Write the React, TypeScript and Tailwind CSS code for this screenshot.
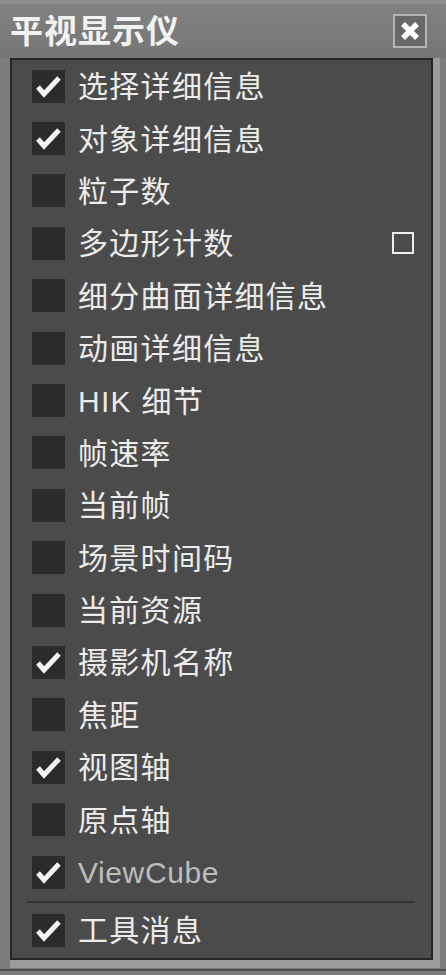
const items = [
  { label: "选择详细信息", checked: true },
  { label: "对象详细信息", checked: true },
  { label: "粒子数", checked: false },
  { label: "多边形计数", checked: false, extra: true },
  { label: "细分曲面详细信息", checked: false },
  { label: "动画详细信息", checked: false },
  { label: "HIK 细节", checked: false },
  { label: "帧速率", checked: false },
  { label: "当前帧", checked: false },
  { label: "场景时间码", checked: false },
  { label: "当前资源", checked: false },
  { label: "摄影机名称", checked: true },
  { label: "焦距", checked: false },
  { label: "视图轴", checked: true },
  { label: "原点轴", checked: false },
  { label: "ViewCube", checked: true, dim: true },
];

const CheckBox = ({ checked }: { checked: boolean }) => (
  <div className="w-[33px] h-[33px] shrink-0 bg-[#2d2a2b]">
    {checked && (
      <svg width="33" height="33" viewBox="0 0 33 33">
        <polyline
          points="6,17 12,24 27,8"
          fill="none"
          stroke="#f4f4f4"
          strokeWidth="5"
          strokeLinejoin="miter"
        />
      </svg>
    )}
  </div>
);

const Row = ({
  label,
  checked,
  extra,
  dim,
}: {
  label: string;
  checked: boolean;
  extra?: boolean;
  dim?: boolean;
}) => (
  <div className="flex items-center h-[52.4px] pl-[20px]">
    <CheckBox checked={checked} />
    <span
      className={
        dim
          ? "ml-[13px] mt-[2px] text-[30px] leading-none tracking-[0.6px] text-[#bdbdbd]"
          : "ml-[13px] mt-[2px] text-[30px] leading-none tracking-[1.3px] text-[#ececec]"
      }
    >
      {label}
    </span>
    {extra && <div className="ml-auto mr-[17px] w-[22px] h-[22px] border-2 border-[#eeeeee]" />}
  </div>
);

export default function App() {
  return (
    <div
      className="w-[446px] h-[975px] bg-[#7c7c7c] overflow-hidden"
      style={{ fontFamily: '"Liberation Sans", "Noto Sans CJK SC", sans-serif' }}
    >
      {/* title bar */}
      <div className="h-[58px] border-t-[4px] border-[#8e8e8e] bg-gradient-to-b from-[#818181] to-[#767676] flex items-center justify-between pl-[10px] pr-[19px]">
        <span className="text-[33px] font-bold leading-none tracking-[1px] text-[#f2f2f2]">平视显示仪</span>
        <button className="w-[34px] h-[34px] bg-[#686868] border-2 border-[#b4b4b4] flex items-center justify-center">
          <svg width="22" height="22" viewBox="0 0 22 22">
            <path d="M4 4 L18 18 M18 4 L4 18" stroke="#ffffff" strokeWidth="5.5" />
          </svg>
        </button>
      </div>

      {/* body */}
      <div className="ml-[10px] w-[430px] border-r-[7px] border-b-[8px] border-[#9c9c9c]">
        <div className="h-[902px] border-2 border-[#262626] bg-[#4b4b4b]">
          {items.map((it) => (
            <Row key={it.label} {...it} />
          ))}
          <div className="mt-[3px] mb-[1px] ml-[15px] mr-[16px] h-[2px] bg-[#333333]" />
          <Row label="工具消息" checked={true} />
        </div>
      </div>
      <div className="mt-[1px] h-[2px] bg-[#505050]" />
    </div>
  );
}
